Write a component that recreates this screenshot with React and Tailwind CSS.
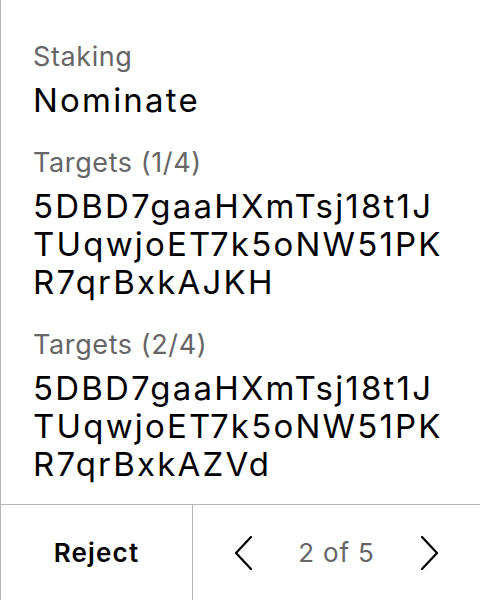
import React from 'react';

const fields = [
  { label: 'Staking', value: 'Nominate' },
  { label: 'Targets (1/4)', value: '5DBD7gaaHXmTsj18t1JTUqwjoET7k5oNW51PKR7qrBxkAJKH' },
  { label: 'Targets (2/4)', value: '5DBD7gaaHXmTsj18t1JTUqwjoET7k5oNW51PKR7qrBxkAZVd' },
];

const Chevron = ({ dir }) => (
  <svg width="20" height="34" viewBox="0 0 20 34" fill="none">
    <polyline
      points={dir === 'left' ? '17,1 2,17 17,33' : '3,1 18,17 3,33'}
      stroke="#000"
      strokeWidth="2.2"
      strokeLinecap="round"
      strokeLinejoin="round"
    />
  </svg>
);

const App = () => {
  return (
    <div
      className="w-[480px] h-[600px] flex flex-col bg-white border-l border-[#b5b5b5] overflow-hidden"
      style={{ fontFamily: 'Inter, "Noto Sans", sans-serif' }}
    >
      {/* Fields */}
      <div className="flex-1 pl-[32px] pr-[36px] pt-[39px] flex flex-col gap-[26px]">
        {fields.map((f) => (
          <div key={f.label} className="flex flex-col gap-[6px]">
            <div className="text-[27px] leading-[36px] tracking-[0.6px] text-[#666]">{f.label}</div>
            <div className="text-[33px] leading-[38px] tracking-[2.2px] text-black break-all">{f.value}</div>
          </div>
        ))}
      </div>

      {/* Footer */}
      <div className="h-[96px] flex border-t border-[#b5b5b5] shrink-0">
        <button className="w-[192px] border-r border-[#b5b5b5] flex items-center justify-center text-[26px] tracking-[1.2px] font-semibold text-black">
          Reject
        </button>
        <div className="flex-1 flex items-center justify-between px-[41px]">
          <Chevron dir="left" />
          <span className="text-[26px] tracking-[0.8px] text-[#666]">2 of 5</span>
          <Chevron dir="right" />
        </div>
      </div>
    </div>
  );
};

export default App;
